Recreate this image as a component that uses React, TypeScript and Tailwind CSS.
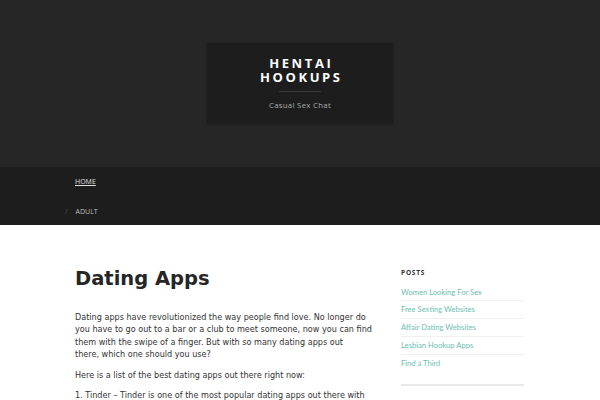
export default function App() {
  const posts = [
    "Women Looking For Sex",
    "Free Sexting Websites",
    "Affair Dating Websites",
    "Lesbian Hookup Apps",
    "Find a Third",
  ];
  return (
    <div className="w-[600px] h-[400px] overflow-hidden bg-white">
      <header className="h-[167px] bg-[#262626] flex items-start justify-center pt-[43px]">
        <div className="w-[186px] h-[81px] bg-[#1d1d1d] flex flex-col items-center pt-[13px] shadow-[0_0_2px_rgba(0,0,0,0.3)]">
          <h1 className="text-white font-bold text-[13px] leading-[14px] tracking-[2.6px] text-center pl-[2.6px] font-['Open_Sans',sans-serif]">
            HENTAI
            <br />
            HOOKUPS
          </h1>
          <div className="w-[42px] h-px bg-[#3a3a3a] mt-[7px]" />
          <p className="mt-[8px] text-[7.8px] text-[#ababab] font-['Open_Sans',sans-serif] tracking-[0.3px]">
            Casual Sex Chat
          </p>
        </div>
      </header>
      <nav className="h-[58px] bg-[#1d1d1d] px-[65px] font-['Open_Sans',sans-serif] text-[7px] uppercase">
        <div className="pt-[10px] pl-[10px]">
          <a className="text-[#e0e0e0] underline">Home</a>
        </div>
        <div className="pt-[19px] flex items-center">
          <span className="text-[#555] mr-[8px]">/</span>
          <a className="text-[#bdbdbd]">Adult</a>
        </div>
      </nav>
      <main className="flex px-[75px] pt-[42px]">
        <article className="w-[297px] shrink-0 font-['DejaVu_Sans',sans-serif] text-[#333]">
          <h2 className="text-[19.5px] leading-[24px] font-bold text-[#262626]">Dating Apps</h2>
          <p className="mt-[20px] text-[8.1px] leading-[12.3px]">
            Dating apps have revolutionized the way people find love. No longer do you have to go out to a bar or a club to meet someone, now you can find them with the swipe of a finger. But with so many dating apps out
            <br />
            there, which one should you use?
          </p>
          <p className="mt-[8.5px] text-[8.1px] leading-[12.3px]">Here is a list of the best dating apps out there right now:</p>
          <p className="mt-[8.5px] text-[8.1px] leading-[12.3px]">
            1. Tinder – Tinder is one of the most popular dating apps out there with millions of users.
          </p>
        </article>
        <aside className="ml-[29px] w-[123px] pt-[1px] font-['Lato',sans-serif]">
          <h3 className="text-[6.5px] font-bold tracking-[0.8px] text-[#333] font-['Open_Sans',sans-serif]">POSTS</h3>
          <ul className="mt-[6px] border-b-2 border-[#e8e8e8] pb-[13px]">
            {posts.map((p, i) => (
              <li
                key={p}
                className={`text-[7.6px] leading-[16.7px] text-[#6cc0b2] ${i < posts.length - 1 ? "border-b border-[#f0f0f0]" : ""}`}
              >
                {p}
              </li>
            ))}
          </ul>
        </aside>
      </main>
    </div>
  );
}
